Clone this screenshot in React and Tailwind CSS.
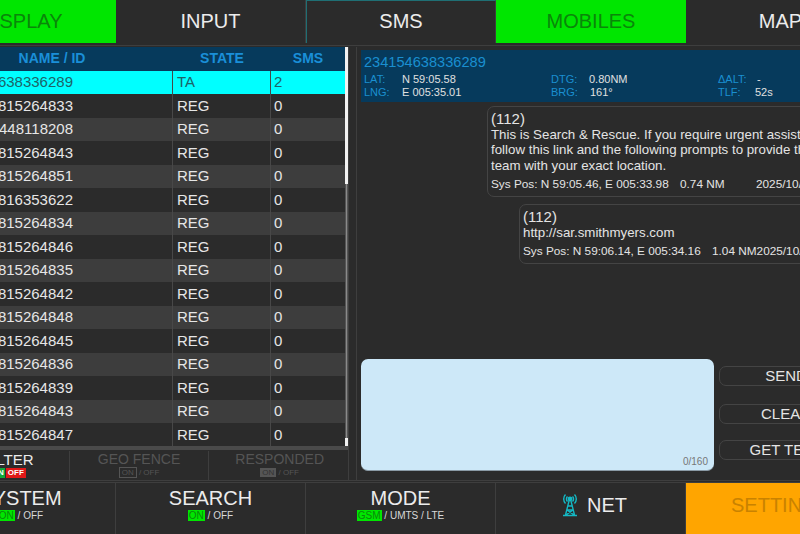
import React from "react";

const rows = [
  ["234154638336289", "TA", "2"],
  ["815264833", "REG", "0"],
  ["448118208", "REG", "0"],
  ["815264843", "REG", "0"],
  ["815264851", "REG", "0"],
  ["816353622", "REG", "0"],
  ["815264834", "REG", "0"],
  ["815264846", "REG", "0"],
  ["815264835", "REG", "0"],
  ["815264842", "REG", "0"],
  ["815264848", "REG", "0"],
  ["815264845", "REG", "0"],
  ["815264836", "REG", "0"],
  ["815264839", "REG", "0"],
  ["815264843", "REG", "0"],
  ["815264847", "REG", "0"],
];

const Tower = () => (
  <svg width="18" height="24" viewBox="0 0 18 24" fill="none" stroke="#14b8c4" strokeWidth="1.4">
    <path d="M6.5 3.5a3.5 3.5 0 0 0 0 5M4.5 1.5a6.5 6.5 0 0 0 0 9M11.5 3.5a3.5 3.5 0 0 1 0 5M13.5 1.5a6.5 6.5 0 0 1 0 9" />
    <circle cx="9" cy="6" r="1.7" fill="#14b8c4" />
    <path d="M8 8 4.5 22M10 8l3.5 14M2 22.5h14M7 13h4M6 17h6M6 17l7 5M12 17l-7 5" />
  </svg>
);

const NavTab = ({ label, active, top }) => (
  <div
    className={`w-[190px] h-full flex items-center justify-center pb-[2px] text-[20px] ${
      active ? "bg-[#00e600] text-[#0a860a]" : "text-[#ececec] border-r border-[#3e3e3e]"
    } ${top ? "border-t border-l border-t-[#1f6f74] border-l-[#1f6f74]" : ""}`}
  >
    {label}
  </div>
);

const Toggle = ({ label, children }) => (
  <div className="w-[190px] h-full flex flex-col items-center pt-[3px] border-r border-[#3e3e3e]">
    <div className="text-[20px] leading-[24px] text-[#ececec]">{label}</div>
    <div className="text-[10px] leading-[12px] text-[#d8d8d8]">{children}</div>
  </div>
);

const Info = ({ label, value, width }) => (
  <div className="flex">
    <span className={`${width} text-[#1a8fd0]`}>{label}</span>
    <span>{value}</span>
  </div>
);

const Bubble = ({ className, lines, pos }) => (
  <div className={`border border-[#444444] rounded-[7px] px-[3px] pt-[3px] pb-[3px] text-[#e4e4e4] whitespace-nowrap overflow-hidden ${className}`}>
    <div className="text-[15px] leading-[17px]">(112)</div>
    {lines.map((line) => (
      <div key={line} className="text-[13.3px] leading-[15.4px]">
        {line}
      </div>
    ))}
    <div className="text-[11.8px] leading-[14px] mt-[4px]">{pos}</div>
  </div>
);

const SideButton = ({ label, className }) => (
  <div className={`w-[134px] h-[20px] border border-[#444444] rounded-[7px] flex items-center justify-center text-[15px] text-[#e4e4e4] ${className}`}>
    {label}
  </div>
);

export default function App() {
  return (
    <div className="w-[800px] h-[534px] overflow-hidden bg-[#2b2b2b] font-['Liberation_Sans',sans-serif]">
      <div className="w-[950px] -ml-[74px]">
        {/* top tabs */}
        <div className="h-[43px] flex">
          <NavTab label="DISPLAY" active />
          <NavTab label="INPUT" />
          <NavTab label="SMS" top />
          <NavTab label="MOBILES" active />
          <NavTab label="MAP" />
        </div>

        <div className="h-[4px] pt-[1px]">
          <div className="h-[2px] border-b border-[#3e3e3e]" />
        </div>

        <div className="h-[433px] flex">
          {/* mobiles list */}
          <div className="w-[423px] pl-[5px] shrink-0 border-r border-[#3e3e3e] flex flex-col">
            <div className="flex h-[399px]">
              <div className="w-[414px]">
                <div className="flex h-[23.5px] bg-[#063a5c] text-[14px] font-bold text-[#1a8fd8] text-center items-center">
                  <div className="w-[242px]">NAME / ID</div>
                  <div className="w-[98px]">STATE</div>
                  <div className="w-[74px]">SMS</div>
                </div>
                {rows.map((row, index) => (
                  <div
                    key={index}
                    className={`flex h-[23.5px] items-center text-[15px] ${
                      index === 0 ? "bg-[#00ffff] text-[#1d6468]" : index % 2 === 0 ? "bg-[#3d3d3d] text-[#e6e6e6]" : "bg-[#2b2b2b] text-[#e6e6e6]"
                    }`}
                  >
                    <div className="w-[242px] h-full flex items-center border-r border-[#484848]">
                      <span className="w-[142px] text-right whitespace-nowrap">{row[0]}</span>
                    </div>
                    <div className="w-[98px] h-full flex items-center pl-[4px] border-r border-[#484848]">{row[1]}</div>
                    <div className="w-[74px] pl-[3px]">{row[2]}</div>
                  </div>
                ))}
              </div>
              <div className="w-[5px] bg-[#f2f2f2] flex flex-col">
                <div className="h-[137px]" />
                <div className="h-[254px] bg-[#8a8a8a] border-x border-[#555555]" />
              </div>
            </div>
            <div className="h-[4px] bg-[#4a4a4a]" />
            {/* filters */}
            <div className="flex h-[29px] mt-[1px]">
              <div className="w-[139px] pl-[17px] flex flex-col items-center border-r border-[#3e3e3e]">
                <div className="text-[15px] leading-[17px] text-[#ececec]">FILTER</div>
                <div className="flex gap-[1px] text-[8px] leading-[10px] font-bold">
                  <span className="bg-[#12a83a] text-white px-[1px]">ON</span>
                  <span className="bg-[#e01818] text-white px-[2px]">OFF</span>
                </div>
              </div>
              <div className="w-[140px] flex flex-col items-center border-r border-[#3e3e3e] text-[#555555]">
                <div className="text-[14px] leading-[17px]">GEO FENCE</div>
                <div className="text-[8px] leading-[10px]">
                  <span className="border border-[#555555] px-[2px]">ON</span> / OFF
                </div>
              </div>
              <div className="w-[139px] pl-[2px] flex flex-col items-center text-[#555555]">
                <div className="text-[14px] leading-[17px]">RESPONDED</div>
                <div className="text-[8px] leading-[10px]">
                  <span className="bg-[#555555] text-[#333333] px-[2px]">ON</span> / OFF
                </div>
              </div>
            </div>
          </div>

          {/* sms panel */}
          <div className="flex-1 ml-[7px] pl-[4px] pt-[3px] border-l border-[#3e3e3e] flex flex-col">
            <div className="h-[52px] bg-[#063a5c] pl-[3px] pt-[3px] text-[#e0e0e0]">
              <div className="text-[14.6px] leading-[18px] text-[#1a8fd0]">234154638336289</div>
              <div className="flex text-[11px] leading-[13px] mt-[2px]">
                <div className="w-[187px]">
                  <Info label="LAT:" value="N 59:05.58" width="w-[38px]" />
                  <Info label="LNG:" value="E 005:35.01" width="w-[38px]" />
                </div>
                <div className="w-[167px]">
                  <Info label="DTG:" value="0.80NM" width="w-[38px]" />
                  <Info label="BRG:" value="161°" width="w-[39px]" />
                </div>
                <div>
                  <Info label="ΔALT:" value="-" width="w-[39px]" />
                  <Info label="TLF:" value="52s" width="w-[37px]" />
                </div>
              </div>
            </div>

            <div className="h-[257px] flex flex-col items-end pr-[14px] pt-[4px] gap-[7px] overflow-hidden">
              <Bubble
                className="w-[375px] h-[91px]"
                lines={[
                  "This is Search & Rescue. If you require urgent assistance",
                  "follow this link and the following prompts to provide the",
                  "team with your exact location.",
                ]}
                pos={
                  <span className="flex">
                    <span className="w-[189px]">Sys Pos: N 59:05.46, E 005:33.98</span>
                    <span className="w-[76px]">0.74 NM</span>
                    <span>2025/10/</span>
                  </span>
                }
              />
              <Bubble
                className="w-[343px] h-[60px]"
                lines={["http://sar.smithmyers.com"]}
                pos={
                  <span className="flex">
                    <span className="w-[189px]">Sys Pos: N 59:06.14, E 005:34.16</span>
                    <span>1.04 NM2025/10/</span>
                  </span>
                }
              />
            </div>

            <div className="flex">
              <div className="relative w-[353px] h-[112px] bg-[#cde8f8] rounded-[7px] border-b border-[#8a9aa5]">
                <span className="absolute right-[6px] bottom-[1px] text-[10px] text-[#777777]">0/160</span>
              </div>
              <div className="ml-[5px] pt-[7px] flex flex-col">
                <SideButton label="SEND" />
                <SideButton label="CLEAR" className="mt-[18px]" />
                <SideButton label="GET TEXT" className="mt-[16px]" />
              </div>
            </div>
          </div>
        </div>

        <div className="h-[3px] border-t border-b border-[#3e3e3e]" />

        {/* bottom bar */}
        <div className="h-[51px] flex">
          <Toggle label="SYSTEM">
            <span className="bg-[#00e600] text-[#0a860a] px-[1px]">ON</span> / OFF
          </Toggle>
          <Toggle label="SEARCH">
            <span className="bg-[#00e600] text-[#0a860a] px-[1px]">ON</span> / OFF
          </Toggle>
          <Toggle label="MODE">
            <span className="bg-[#00e600] text-[#0a860a] px-[1px]">GSM</span> / UMTS / LTE
          </Toggle>
          <div className="w-[190px] h-full flex items-center justify-center gap-[8px] pl-[7px] pb-[8px] text-[20px] text-[#ececec] border-r border-[#3e3e3e]">
            <Tower />
            <span>NET</span>
          </div>
          <div className="w-[190px] h-full flex items-center justify-center pb-[8px] text-[20px] bg-[#ffa500] text-[#c98200]">SETTINGS</div>
        </div>
      </div>
    </div>
  );
}
